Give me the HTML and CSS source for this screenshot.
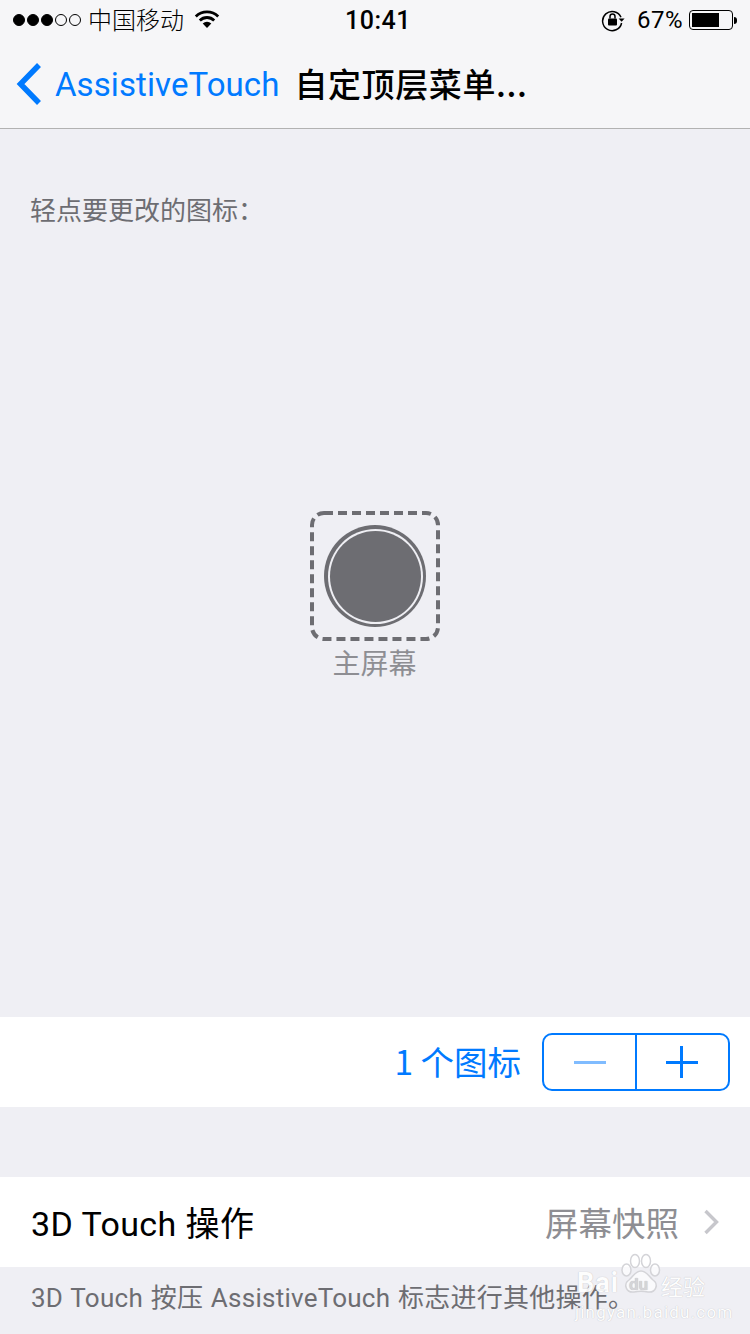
FILE: index.html
```html
<!DOCTYPE html>
<html>
<head>
    <title>自定顶层菜单</title>
    <meta name="viewport" content="width=device-width, initial-scale=1">
    <link rel="stylesheet" href="styles.css">
</head>
<body>
    <div id="app">
        <div class="top-bar">
            <div class="status-bar">
                <div class="status-left">
                    <span class="signal">
                        <i class="dot"></i><i class="dot"></i><i class="dot"></i><i class="dot off"></i><i class="dot off"></i>
                    </span>
                    <span class="carrier">中国移动</span>
                    <svg class="wifi" width="26" height="20" viewBox="0 0 26 20">
                        <path d="M1.800 7.500a16 16 0 0 1 22.400 0" fill="none" stroke="#000" stroke-width="2.800"/>
                        <path d="M5.800 11.500a10.200 10.200 0 0 1 14.400 0" fill="none" stroke="#000" stroke-width="2.800"/>
                        <path d="M8.700 14.600a6 6 0 0 1 8.600 0L13 19z" fill="#000"/>
                    </svg>
                </div>
                <div class="clock">10:41</div>
                <div class="status-right">
                    <svg class="lock" width="24" height="24" viewBox="0 0 24 24">
                        <path d="M20 9.200A9.600 9.600 0 1 0 20.600 15" fill="none" stroke="#000" stroke-width="1.500"/>
                        <path d="M17.600 10.500h6l-3 3.200z" fill="#000"/>
                        <rect x="7" y="10.500" width="9" height="7" rx="1" fill="#000"/>
                        <path d="M9 10.500V8.600a2.500 2.500 0 0 1 5 0v1.900" fill="none" stroke="#000" stroke-width="1.500"/>
                    </svg>
                    <span class="battery-text">67%</span>
                    <span class="battery"><span class="battery-level"></span></span>
                    <span class="battery-tip"></span>
                </div>
            </div>
            <div class="nav-bar">
                <svg class="back" width="28" height="44" viewBox="0 0 28 44">
                    <path d="M25 3 6.500 22 25 41" fill="none" stroke="#007aff" stroke-width="5.500"/>
                </svg>
                <span class="back-text">AssistiveTouch</span>
                <span class="nav-title">自定顶层菜单...</span>
            </div>
        </div>

        <div class="canvas">
            <div class="hint">轻点要更改的图标：</div>
            <div class="icon-area">
                <div class="icon-slot">
                    <svg class="slot-border" width="130" height="130" viewBox="0 0 130 130">
                        <rect x="2" y="2" width="126" height="126" rx="12" fill="none" stroke="#6d6d72" stroke-width="4" stroke-dasharray="9 5"/>
                    </svg>
                    <div class="home-ring"><div class="home-disc"></div></div>
                </div>
                <div class="icon-label">主屏幕</div>
            </div>
        </div>

        <div class="row stepper-row">
            <span class="count">1 个图标</span>
            <div class="stepper">
                <div class="step"><span class="minus"></span></div>
                <div class="step step-plus"><span class="plus"></span></div>
            </div>
        </div>

        <div class="row action-row">
            <span class="action-name">3D Touch 操作</span>
            <span class="action-value">屏幕快照</span>
            <svg class="chevron" width="18" height="26" viewBox="0 0 18 26">
                <path d="M2.500 2 13.500 13 2.500 24" fill="none" stroke="#c7c7cc" stroke-width="3.400"/>
            </svg>
        </div>
        <div class="footnote">3D Touch 按压 AssistiveTouch 标志进行其他操作。</div>

        <div class="watermark">
            <svg class="paw" width="40" height="42" viewBox="0 0 40 42">
                <g fill="#fff" fill-opacity="0.7" stroke="#d4d4d8" stroke-width="1.500">
                    <ellipse cx="14" cy="8" rx="4.500" ry="6.500"/>
                    <ellipse cx="25" cy="8" rx="4.500" ry="6.500"/>
                    <ellipse cx="5.500" cy="17" rx="4.500" ry="6"/>
                    <ellipse cx="34" cy="17" rx="4.500" ry="6"/>
                    <path d="M20 18c-6 0-8 6-12 9-6 4-3 13 5 12 5-1 9-1 14 0 8 1 11-8 5-12-4-3-6-9-12-9z"/>
                </g>
            </svg>
            <span class="wm-bai">Bai</span>
            <span class="wm-du">du</span>
            <span class="wm-jy">经验</span>
            <span class="wm-url">jingyan.baidu.com</span>
        </div>
    </div>
</body>
</html>
```
FILE: styles.css
```css
* {
    box-sizing: border-box;
}
html, body {
    margin: 0;
    padding: 0;
}
body {
    font-family: Roboto, "Noto Sans CJK SC", sans-serif;
    background: #efeff4;
    width: 750px;
    height: 1334px;
    overflow: hidden;
}
#app {
    position: relative;
    width: 750px;
    height: 1334px;
    overflow: hidden;
    display: flex;
    flex-direction: column;
}
.top-bar {
    height: 129px;
    background: #f6f6f8;
    border-bottom: 1px solid #b2b2b2;
    flex: none;
}
.status-bar {
    height: 40px;
    padding: 0 12px 0 13px;
    display: flex;
    align-items: center;
    justify-content: space-between;
    position: relative;
    color: #000;
    font-size: 24px;
}
.status-left, .status-right {
    display: flex;
    align-items: center;
}
.signal {
    display: flex;
    gap: 2px;
}
.dot {
    width: 12px;
    height: 12px;
    border-radius: 50%;
    background: #000;
    border: 1px solid #000;
}
.dot.off {
    background: none;
}
.carrier {
    margin-left: 7px;
    margin-top: -3px;
    font-size: 24px;
    font-family: "Noto Sans CJK SC", sans-serif;
    font-weight: 300;
}
.wifi {
    margin-left: 10px;
    margin-top: -2px;
}
.clock {
    position: absolute;
    left: 6px;
    right: 0;
    text-align: center;
    font-size: 25px;
    font-weight: 500;
    letter-spacing: 0.5px;
}
.lock {
    margin-right: 12px;
}
.battery-text {
    font-size: 24px;
    margin-right: 6px;
    letter-spacing: 0.5px;
}
.battery {
    width: 44px;
    height: 20px;
    border: 1.500px solid #000;
    border-radius: 4px;
    padding: 2px;
    display: block;
}
.battery-level {
    display: block;
    width: 27px;
    height: 100%;
    background: #000;
}
.battery-tip {
    width: 3px;
    height: 7px;
    margin-left: 1px;
    margin-right: 1px;
    background: #000;
    border-radius: 0 3px 3px 0;
}
.nav-bar {
    height: 88px;
    display: flex;
    align-items: center;
    padding-left: 14px;
}
.back {
    flex: none;
}
.back-text {
    margin-left: 13px;
    font-size: 33px;
    letter-spacing: 0.08px;
    color: #007aff;
}
.nav-title {
    margin-left: 15px;
    margin-top: -3px;
    font-size: 33px;
    letter-spacing: 0.6px;
    color: #000;
    font-family: "Noto Sans CJK SC", sans-serif;
    font-weight: 500;
}
.canvas {
    height: 888px;
    flex: none;
    padding: 62px 30px 0;
    display: flex;
    flex-direction: column;
}
.hint {
    font-size: 26px;
    line-height: 36px;
    color: #6d6d72;
    font-family: "Noto Sans CJK SC", sans-serif;
}
.icon-area {
    margin-top: 284px;
    display: flex;
    flex-direction: column;
    align-items: center;
}
.icon-slot {
    position: relative;
    width: 130px;
    height: 130px;
    display: flex;
    align-items: center;
    justify-content: center;
}
.slot-border {
    position: absolute;
    left: 0;
    top: 0;
}
.home-ring {
    width: 102px;
    height: 102px;
    border-radius: 50%;
    background: #6d6d72;
    display: flex;
    align-items: center;
    justify-content: center;
}
.home-disc {
    width: 91px;
    height: 91px;
    border-radius: 50%;
    background: #6d6d72;
    box-shadow: 0 0 0 2px #efeff4;
}
.icon-label {
    margin-top: 3px;
    margin-right: 1px;
    font-size: 28px;
    line-height: 36px;
    color: #8e8e93;
    font-family: "Noto Sans CJK SC", sans-serif;
}
.row {
    background: #fff;
    height: 90px;
    flex: none;
    display: flex;
    align-items: center;
}
.stepper-row {
    justify-content: flex-end;
    padding-right: 20px;
}
.count {
    font-size: 33.500px;
    color: #007aff;
    margin-right: 21px;
    margin-top: -4px;
    font-family: "Noto Sans CJK SC", sans-serif;
}
.stepper {
    width: 188px;
    height: 58px;
    border: 2px solid #007aff;
    border-radius: 10px;
    display: flex;
}
.step {
    width: 91px;
    display: flex;
    align-items: center;
    justify-content: center;
}
.step-plus {
    flex: 1;
    border-left: 2px solid #007aff;
}
.minus {
    width: 32px;
    height: 3px;
    background: #80bcff;
}
.plus {
    width: 32px;
    height: 32px;
    margin-left: -2px;
    background: linear-gradient(#007aff, #007aff) center / 32px 3px no-repeat,
        linear-gradient(#007aff, #007aff) center / 3px 32px no-repeat;
}
.action-row {
    margin-top: 70px;
    padding: 0 29px 0 31px;
}
.action-name {
    flex: 1;
    font-size: 34px;
    letter-spacing: 0.4px;
    color: #000;
    margin-top: -2px;
}
.action-value {
    font-size: 33.500px;
    color: #8e8e93;
    margin-top: -2px;
    font-family: "Noto Sans CJK SC", sans-serif;
}
.chevron {
    margin-left: 24px;
}
.footnote {
    padding: 13px 31px 0;
    font-size: 26px;
    letter-spacing: 0.25px;
    word-spacing: 1px;
    line-height: 36px;
    color: #6d6d72;
    white-space: nowrap;
}
.watermark {
    position: absolute;
    left: 570px;
    top: 1250px;
    width: 150px;
    height: 70px;
    color: #fff;
}
.watermark span {
    position: absolute;
    white-space: nowrap;
    opacity: 0.9;
    text-shadow: 0 0 1px #b0b0b4;
}
.paw {
    position: absolute;
    left: 51px;
    top: 3px;
}
.wm-bai {
    left: 7px;
    top: 17px;
    font-size: 27px;
    font-weight: bold;
    letter-spacing: 1px;
}
.wm-du {
    left: 59px;
    top: 24px;
    font-size: 17px;
    font-weight: bold;
    color: #d0d0d4;
}
.wm-jy {
    left: 91px;
    top: 19px;
    font-size: 22px;
    font-family: "Noto Sans CJK SC", sans-serif;
}
.wm-url {
    left: 5px;
    top: 52px;
    font-size: 17px;
    letter-spacing: 1.200px;
}
```
